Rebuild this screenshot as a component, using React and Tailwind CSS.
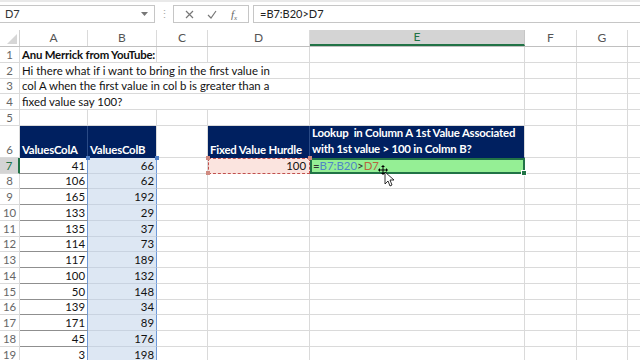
import React from "react";

const colA = [41, 106, 165, 133, 135, 114, 117, 100, 50, 139, 171, 45, 3];
const colB = [66, 62, 192, 29, 37, 73, 189, 132, 148, 34, 89, 176, 198];

const W = {
  h: "w-[20px]",
  A: "w-[68px]",
  B: "w-[69px]",
  C: "w-[51px]",
  D: "w-[102px]",
  E: "w-[215px]",
  F: "w-[52px]",
  G: "w-[51px]",
  H: "w-[40px]",
};

function Cell({ w, className = "", children }) {
  return (
    <div className={`${w} shrink-0 h-full border-r border-b border-[#dadada] px-[2px] flex items-end whitespace-nowrap leading-[15px] ${className}`}>
      {children}
    </div>
  );
}

function RowNum({ n, className = "" }) {
  return (
    <div className={`w-[20px] shrink-0 h-full border-r border-b border-[#dadada] flex items-end justify-center leading-[15px] text-[#666] ${className}`}>
      {n}
    </div>
  );
}

function FormulaBar() {
  return (
    <div className="h-[30px] flex items-start pt-[5px] relative">
      <div className="w-[155px] h-[18px] border-y border-r border-[#c6c6c6] flex items-center pl-[5px] pr-[6px] justify-between text-[11px] text-[#333]">
        <span>D7</span>
        <svg width="7" height="4" viewBox="0 0 7 4"><path d="M0 0h7L3.5 4z" fill="#777" /></svg>
      </div>
      <div className="w-[18px] h-[18px] flex items-center justify-center text-[#aaa] text-[11px]">⋮</div>
      <div className="w-[76px] h-[18px] border border-[#c6c6c6] flex items-center justify-around px-[4px] text-[#888]">
        <svg width="9" height="9" viewBox="0 0 9 9"><path d="M1 1l7 7M8 1L1 8" stroke="#777" strokeWidth="1.2" /></svg>
        <svg width="10" height="9" viewBox="0 0 10 9"><path d="M1 5l3 3 5-7" stroke="#777" strokeWidth="1.2" fill="none" /></svg>
        <span className="italic text-[11px] font-['Liberation_Serif',serif] text-[#666]">f<sub className="text-[7px]">x</sub></span>
      </div>
      <div className="ml-[4px] flex-1 h-[18px] border-y border-l border-[#c6c6c6] flex items-center pl-[6px] text-[11px] text-[#222]">
        =B7:B20&gt;D7
      </div>
    </div>
  );
}

function HeaderRow() {
  const labels = ["A", "B", "C", "D", "E", "F", "G", ""];
  const keys = ["A", "B", "C", "D", "E", "F", "G", "H"];
  return (
    <div className="h-[17px] flex border-b border-[#c0c0c0] text-[12px] text-[#555] bg-white">
      <div className="w-[20px] shrink-0 h-full border-r border-[#d0d0d0] relative">
        <svg className="absolute right-[2px] bottom-[2px]" width="10" height="10" viewBox="0 0 10 10"><path d="M10 0v10H0z" fill="#d6d6d6" /></svg>
      </div>
      {keys.map((k, i) =>
        k === "E" ? (
          <div key={k} className={`${W[k]} shrink-0 h-full border-r border-[#c6c6c6] bg-[#d4d4d4] border-b-2 border-b-[#217346] flex items-center justify-center text-[#217346]`}>
            {labels[i]}
          </div>
        ) : (
          <div key={k} className={`${W[k]} shrink-0 h-full border-r border-[#dadada] flex items-center justify-center`}>
            {labels[i]}
          </div>
        )
      )}
    </div>
  );
}

function TextRow({ n, text, bold, spanAll }) {
  return (
    <div className="h-[15.75px] flex">
      <RowNum n={n} />
      <Cell w={W.A} className={`border-r-0 overflow-visible text-[#111] ${bold ? "font-bold tracking-[-0.2px]" : ""}`}>
        {text}
      </Cell>
      <Cell w={W.B} className={spanAll ? "border-r-0" : ""} />
      <Cell w={W.C} className={spanAll ? "border-r-0" : ""} />
      <Cell w={W.D} />
      <Cell w={W.E} />
      <Cell w={W.F} />
      <Cell w={W.G} />
      <Cell w={W.H} />
    </div>
  );
}

function DataRow({ i }) {
  const n = i + 7;
  const first = i === 0;
  return (
    <div className="h-[15.75px] flex">
      {first ? (
        <RowNum n={n} className="bg-[#d4d4d4] text-[#217346] border-r-2 border-r-[#217346]" />
      ) : (
        <RowNum n={n} />
      )}
      <Cell w={W.A} className="justify-end border-b-[#8f8f8f] border-r-[#6f9ad8] text-[#111]">
        {colA[i]}
      </Cell>
      <Cell w={W.B} className="justify-end bg-[#dde7f3] border-b-[#c9d3e0] border-r-[#6f9ad8] text-[#111]">
        {colB[i]}
      </Cell>
      <Cell w={W.C} />
      {first ? (
        <div className="w-[102px] shrink-0 h-full border border-dashed border-[#c0504d] bg-[#fbe4df] flex items-end justify-end pr-[3px] leading-[14px] text-[#111]">
          100
        </div>
      ) : (
        <Cell w={W.D} />
      )}
      {first ? (
        <div className="w-[215px] shrink-0 h-full border-2 border-[#217346] bg-[#95ef95] flex items-end pl-[1px] leading-[12px] whitespace-nowrap relative">
          <span className="text-[#333]">=</span>
          <span className="text-[#4f86c6]">B7:B20</span>
          <span className="text-[#333]">&gt;</span>
          <span className="text-[#b5673e]">D7</span>
          <div className="absolute right-[-4px] bottom-[-4px] w-[6px] h-[6px] bg-[#217346] border border-white" />
        </div>
      ) : (
        <Cell w={W.E} />
      )}
      <Cell w={W.F} />
      <Cell w={W.G} />
      <Cell w={W.H} />
    </div>
  );
}

export default function App() {
  return (
    <div className="w-[640px] h-[360px] overflow-hidden bg-white relative font-['Lato',sans-serif] text-[11.4px]">
      <div className="h-[2px] bg-[#e9e9e9]" />
      <div className="-mt-[2px]">
        <FormulaBar />
      </div>
      <HeaderRow />
      <TextRow n={1} text="Anu Merrick from YouTube:" bold />
      <TextRow n={2} text="Hi there what if i want to bring in the first value in" spanAll />
      <TextRow n={3} text="col A when the first value in col b is greater than a" spanAll />
      <TextRow n={4} text="fixed value say 100?" spanAll />
      <div className="h-[15.75px] flex">
        <RowNum n={5} />
        <Cell w={W.A} />
        <Cell w={W.B} />
        <Cell w={W.C} />
        <Cell w={W.D} />
        <Cell w={W.E} />
        <Cell w={W.F} />
        <Cell w={W.G} />
        <Cell w={W.H} />
      </div>
      <div className="h-[32px] flex">
        <RowNum n={6} />
        <Cell w={W.A} className="bg-[#002060] border-r-[#2a4a86] border-b-[#002060] text-white font-bold tracking-[-0.2px]">ValuesColA</Cell>
        <Cell w={W.B} className="bg-[#002060] border-b-[#002060] text-white font-bold tracking-[-0.2px]">ValuesColB</Cell>
        <Cell w={W.C} />
        <Cell w={W.D} className="bg-[#002060] border-r-[#2a4a86] border-b-[#002060] text-white font-bold tracking-[-0.2px]">Fixed Value Hurdle</Cell>
        <Cell w={W.E} className="bg-[#002060] border-b-[#002060] text-white font-bold tracking-[-0.2px] leading-[16px]">
          <span>
            Lookup&nbsp; in Column A 1st Value Associated
            <br />
            with 1st value &gt; 100 in Colmn B?
          </span>
        </Cell>
        <Cell w={W.F} />
        <Cell w={W.G} />
        <Cell w={W.H} />
      </div>
      {colA.map((_, i) => (
        <DataRow key={i} i={i} />
      ))}

      <div className="absolute left-[86px] top-[156px] w-[4px] h-[4px] bg-[#4f7fc6]" />
      <div className="absolute left-[155px] top-[156px] w-[4px] h-[4px] bg-[#4f7fc6]" />
      <div className="absolute left-[206px] top-[156px] w-[4px] h-[4px] bg-[#d08a80]" />
      <div className="absolute left-[308px] top-[156px] w-[4px] h-[4px] bg-[#d08a80]" />
      <div className="absolute left-[206px] top-[171px] w-[4px] h-[4px] bg-[#d08a80]" />

      <svg className="absolute left-[378px] top-[165px]" width="16" height="22" viewBox="0 0 16 22">
        <path d="M5 1v8M1 5h8" stroke="#000" strokeWidth="1" />
        <path d="M5 0l-2 2h4zM5 10l-2-2h4zM0 5l2-2v4zM10 5l-2-2v4z" fill="#000" />
        <path d="M7 7v12l3-3 2 5 2-1-2-5h4z" fill="#fff" stroke="#000" strokeWidth="0.8" />
      </svg>
    </div>
  );
}
